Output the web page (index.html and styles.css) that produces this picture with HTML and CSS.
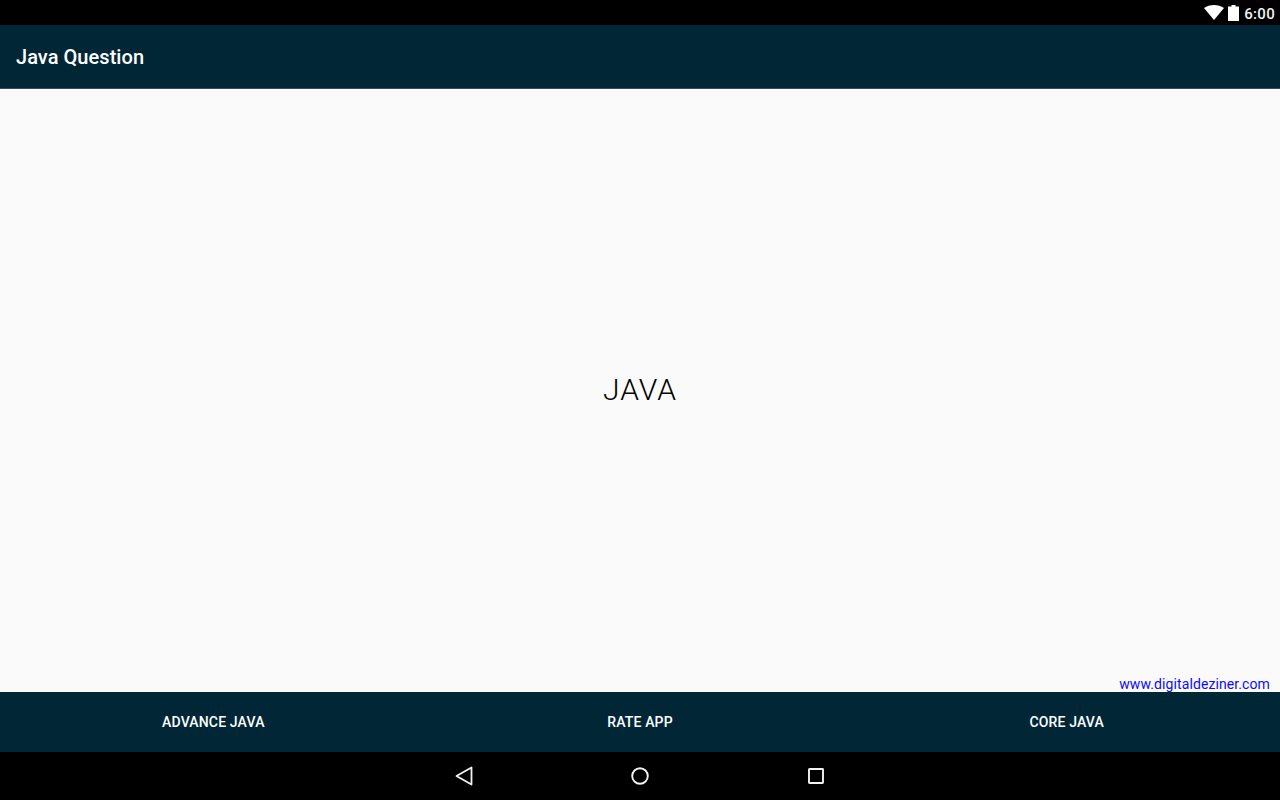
FILE: index.html
```html
<!DOCTYPE html>
<html lang="en">
<head>
<meta charset="utf-8">
<title>Java Question</title>
<link rel="stylesheet" href="styles.css">
</head>
<body>
<div class="screen">
  <div class="status-bar">
    <svg class="wifi" width="20" height="15" viewBox="0 0 20 15"><path d="M0 3C2.800 1 6.200 0 10 0s7.200 1 10 3L10 15z" fill="#fff"/></svg>
    <svg class="battery" width="11" height="16" viewBox="0 0 11 16"><path d="M3.500 0h4v1.500H11V16H0V1.500h3.500z" fill="#fff"/></svg>
    <span class="clock">6:00</span>
  </div>
  <header class="app-bar"><h1 class="app-title">Java Question</h1></header>
  <main class="content">
    <div class="topic">JAVA</div>
    <div class="credit">www.digitaldeziner.com</div>
  </main>
  <nav class="actions">
    <div class="action">ADVANCE JAVA</div>
    <div class="action">RATE APP</div>
    <div class="action">CORE JAVA</div>
  </nav>
  <div class="nav-bar">
    <div class="nav-key"><svg width="18" height="20" viewBox="0 0 18 20"><path d="M16.500 1.500v17L1.500 10z" fill="none" stroke="#f2f2f2" stroke-width="1.800" stroke-linejoin="round"/></svg></div>
    <div class="nav-key"><svg width="18" height="18" viewBox="0 0 18 18"><circle cx="9" cy="9" r="7.800" fill="none" stroke="#f2f2f2" stroke-width="1.900"/></svg></div>
    <div class="nav-key"><svg width="16" height="16" viewBox="0 0 16 16"><rect x="1" y="1" width="14" height="14" rx="0.500" fill="none" stroke="#f2f2f2" stroke-width="1.900"/></svg></div>
  </div>
</div>
</body>
</html>
```
FILE: styles.css
```css
* { box-sizing: border-box; margin: 0; padding: 0; }
html, body { width: 1280px; height: 800px; overflow: hidden; }
body { font-family: Roboto, "Liberation Sans", sans-serif; background: #000; }
.screen { display: flex; flex-direction: column; width: 1280px; height: 800px; }
.status-bar {
  display: flex; align-items: center; justify-content: flex-end;
  height: 25px; background: #000; padding-right: 5px; color: #fff;
}
.wifi { margin-right: 4px; }
.battery { margin-right: 5px; }
.clock { margin-top: 4px; font-size: 15px; font-weight: 500; line-height: 21px; letter-spacing: 0.300px; color: #f2f2f2; }
.app-bar {
  display: flex; align-items: center; height: 64px; padding-left: 16px;
  background: #012737; border-bottom: 1px solid #3a4a52;
}
.app-title { font-size: 20px; font-weight: 500; letter-spacing: 0.050px; color: #fff; }
.content {
  position: relative; flex: 1; display: flex; align-items: center; justify-content: center;
  background: #fafafa; padding-bottom: 3px;
}
.topic { font-size: 30px; font-weight: 300; letter-spacing: 1px; color: #000; }
.credit {
  position: absolute; right: 10px; bottom: 0; font-size: 14px; line-height: 16px;
  letter-spacing: 0.100px; color: #0a0aff;
}
.actions { display: flex; height: 60px; background: #012737; }
.action {
  flex: 1; display: flex; align-items: center; justify-content: center;
  font-size: 14px; font-weight: 500; letter-spacing: 0.150px; color: #fff;
}
.nav-bar {
  display: flex; align-items: center; justify-content: center;
  height: 48px; background: #000;
}
.nav-key { display: flex; align-items: center; justify-content: center; width: 176px; }
```
